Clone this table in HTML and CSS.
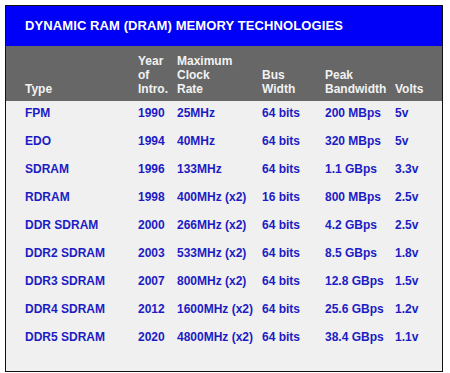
FILE: index.html
```html
<!DOCTYPE html>
<html>
<head>
<meta charset="utf-8">
<link rel="stylesheet" href="styles.css">
</head>
<body>
<div class="frame">
  <div class="title">DYNAMIC RAM (DRAM) MEMORY TECHNOLOGIES</div>
  <table class="grid">
    <colgroup>
      <col class="c1"><col class="c2"><col class="c3"><col class="c4"><col class="c5"><col class="c6">
    </colgroup>
    <thead>
      <tr>
        <th>Type</th>
        <th>Year<br>of<br>Intro.</th>
        <th>Maximum<br>Clock<br>Rate</th>
        <th>Bus<br>Width</th>
        <th>Peak<br>Bandwidth</th>
        <th>Volts</th>
      </tr>
    </thead>
    <tbody>
      <tr><td>FPM</td><td>1990</td><td>25MHz</td><td>64 bits</td><td>200 MBps</td><td>5v</td></tr>
      <tr><td>EDO</td><td>1994</td><td>40MHz</td><td>64 bits</td><td>320 MBps</td><td>5v</td></tr>
      <tr><td>SDRAM</td><td>1996</td><td>133MHz</td><td>64 bits</td><td>1.1 GBps</td><td>3.3v</td></tr>
      <tr><td>RDRAM</td><td>1998</td><td>400MHz (x2)</td><td>16 bits</td><td>800 MBps</td><td>2.5v</td></tr>
      <tr><td>DDR SDRAM</td><td>2000</td><td>266MHz (x2)</td><td>64 bits</td><td>4.2 GBps</td><td>2.5v</td></tr>
      <tr><td>DDR2 SDRAM</td><td>2003</td><td>533MHz (x2)</td><td>64 bits</td><td>8.5 GBps</td><td>1.8v</td></tr>
      <tr><td>DDR3 SDRAM</td><td>2007</td><td>800MHz (x2)</td><td>64 bits</td><td>12.8 GBps</td><td>1.5v</td></tr>
      <tr><td>DDR4 SDRAM</td><td>2012</td><td>1600MHz (x2)</td><td>64 bits</td><td>25.6 GBps</td><td>1.2v</td></tr>
      <tr><td>DDR5 SDRAM</td><td>2020</td><td>4800MHz (x2)</td><td>64 bits</td><td>38.4 GBps</td><td>1.1v</td></tr>
    </tbody>
  </table>
</div>
</body>
</html>
```
FILE: styles.css
```css
html, body {
  margin: 0;
  padding: 0;
  background: #ffffff;
}
body {
  padding: 5px 0 0 5px;
  font-family: "Liberation Sans", Arial, sans-serif;
  font-weight: bold;
}
.frame {
  width: 436px;
  border: 1px solid #111;
  background: #f0f0f0;
  padding-bottom: 18px;
}
.title {
  background: #0000f8;
  color: #ffffff;
  font-size: 13px;
  height: 40px;
  line-height: 40px;
  padding-left: 19px;
  letter-spacing: 0.1px;
}
.grid {
  border-collapse: collapse;
  table-layout: fixed;
  width: 436px;
  font-size: 12px;
}
.c1 { width: 132px; }
.c2 { width: 39px; }
.c3 { width: 85px; }
.c4 { width: 63px; }
.c5 { width: 70px; }
.c6 { width: 47px; }
.grid th {
  background: #676767;
  color: #f2f2f2;
  text-align: left;
  vertical-align: bottom;
  padding: 0 0 5px 0;
  height: 50px;
  line-height: 14px;
  font-weight: bold;
}
.grid td {
  color: #1c1cc4;
  height: 28px;
  padding: 5px 0 0 0;
  line-height: 14px;
  vertical-align: top;
  white-space: nowrap;
  box-sizing: border-box;
}
.grid th:first-child, .grid td:first-child {
  padding-left: 19px;
}
```
